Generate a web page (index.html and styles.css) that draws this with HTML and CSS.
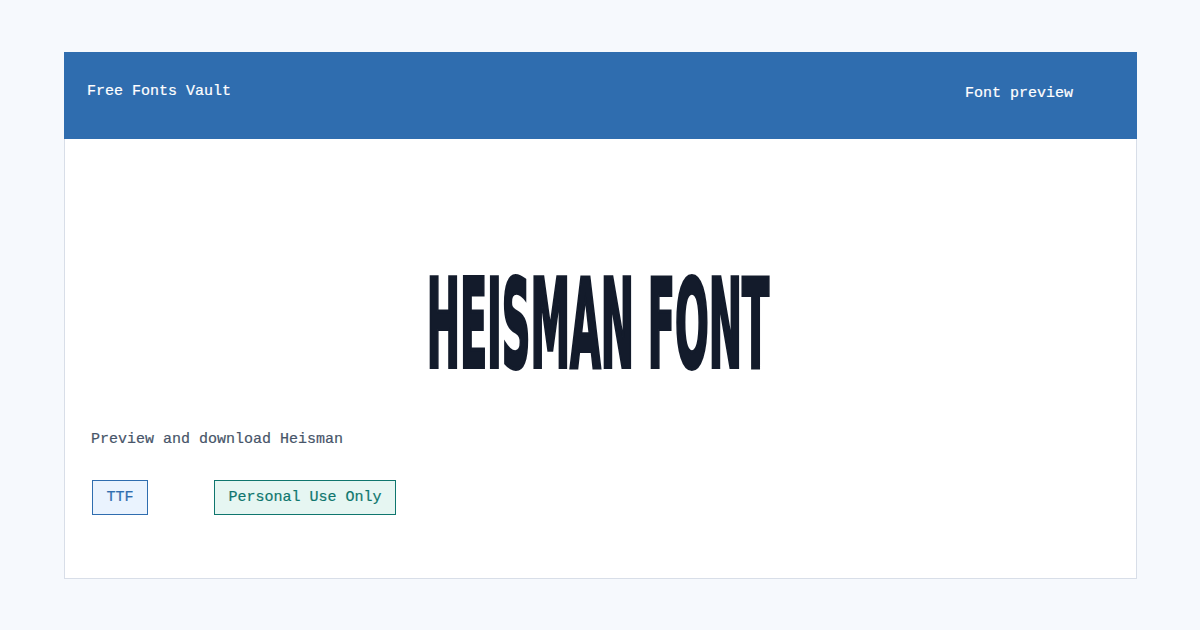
FILE: index.html
```html
<!DOCTYPE html>
<html lang="en">
<head>
    <meta charset="UTF-8">
    <meta name="viewport" content="width=device-width, initial-scale=1.0">
    <title>Heisman Font - Free Fonts Vault</title>
    <link rel="stylesheet" href="styles.css">
</head>
<body>
    <div class="card">
        <header class="site-header">
            <div class="brand">Free Fonts Vault</div>
            <nav class="nav">Font preview</nav>
        </header>

        <main class="card-body">
            <div class="hero">
                <h1 class="hero-title">HEISMAN FONT</h1>
            </div>
            <p class="subtitle">Preview and download Heisman</p>
            <div class="badges">
                <span class="badge badge-format">TTF</span>
                <span class="badge badge-license">Personal Use Only</span>
            </div>
        </main>
    </div>
</body>
</html>
```

FILE: styles.css
```css
body {
    margin: 0;
    padding: 52px 0 0 64px;
    background-color: #f6f9fd;
    font-family: 'Liberation Mono', 'Courier New', monospace;
    font-size: 15px;
    -webkit-text-stroke: 0.2px currentColor;
}

.card {
    width: 1073px;
    background-color: #ffffff;
}

.site-header {
    height: 87px;
    box-sizing: border-box;
    padding: 31px 64px 0 23px;
    background-color: #2f6daf;
    color: #ffffff;
    display: flex;
    justify-content: space-between;
    align-items: flex-start;
    line-height: 17px;
}

.nav {
    margin-top: 2px;
}

.card-body {
    border: 1px solid #d8dee8;
    border-top: none;
    padding: 121px 27px 63px;
}

.hero {
    display: flex;
    justify-content: center;
    height: 129px;
}

.hero-title {
    margin: 0;
    font-family: 'DejaVu Sans Condensed', 'DejaVu Sans', sans-serif;
    font-stretch: condensed;
    font-weight: 700;
    font-size: 123px;
    line-height: 129px;
    color: #131b2b;
    white-space: nowrap;
    -webkit-text-stroke: 4px #131b2b;
    transform: translateX(-3px) scaleX(0.359);
    transform-origin: center;
}

.subtitle {
    margin: 42px 0 0 -1px;
    line-height: 17px;
    color: #475569;
}

.badges {
    display: flex;
    gap: 66px;
    margin-top: 32px;
}

.badge {
    display: block;
    padding: 8px 13.5px;
    line-height: 17px;
    border: 1px solid;
}

.badge-format {
    color: #2f6daf;
    border-color: #2f6daf;
    background-color: #eaf3fe;
}

.badge-license {
    color: #0f766e;
    border-color: #0f766e;
    background-color: #e6f6f2;
}
```
